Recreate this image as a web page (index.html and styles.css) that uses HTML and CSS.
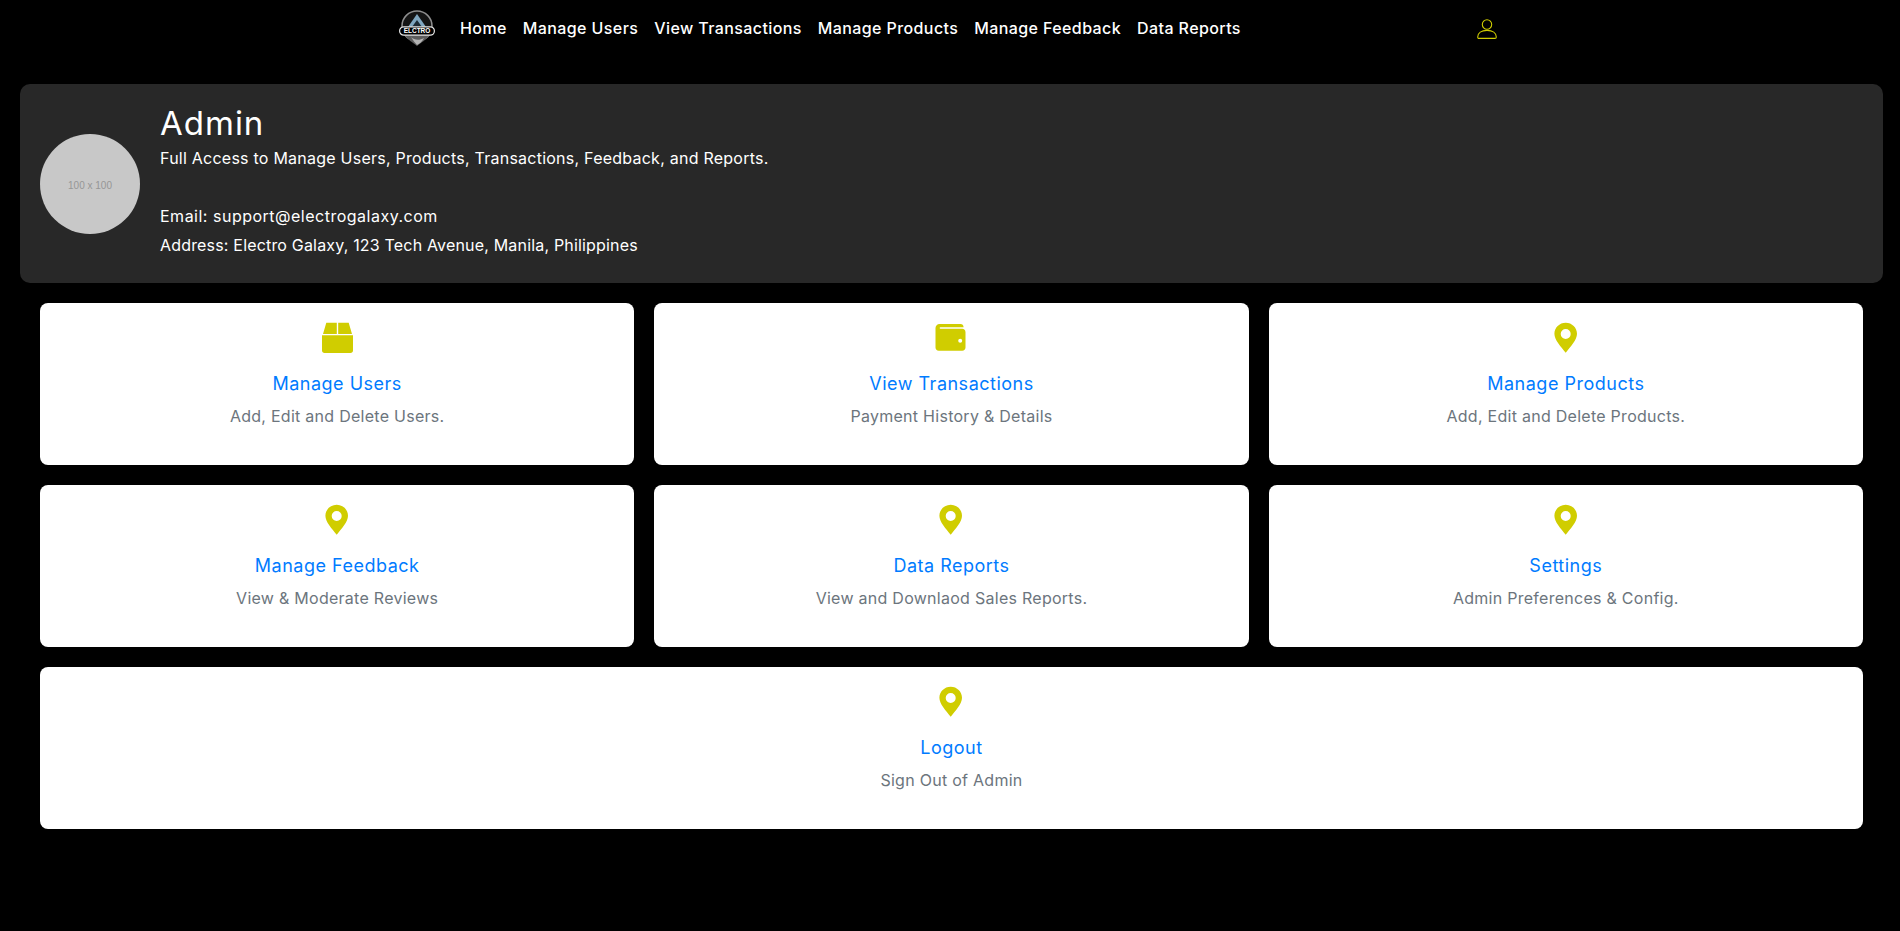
FILE: index.html
```html
<!DOCTYPE html>
<html lang="en">
<head>
<meta charset="utf-8">
<title>Admin</title>
<link rel="stylesheet" href="styles.css">
</head>
<body>
<header class="topbar">
  <svg class="logo" viewBox="0 0 40 40" aria-hidden="true">
    <circle cx="20" cy="17" r="15" fill="#141414" stroke="#8e8e8e" stroke-width="1.5"/>
    <path d="M20 5 L29 18 H11 Z" fill="#7fa6bf"/>
    <path d="M20 11 L25 18 H15 Z" fill="#1d2a33"/>
    <path d="M8 26 C11 31 15 33 20 37 C25 33 29 31 32 26 Z" fill="#5c5c5c"/>
    <path d="M14 28 C17 31 22 32 27 29 C25 33 22 35 20 36 C18 34 16 31 14 28 Z" fill="#b4b4b4"/>
    <rect x="2.6" y="17.8" width="34.8" height="8.4" rx="4.2" fill="#000" stroke="#e6e6e6" stroke-width="1.2"/>
    <text x="20" y="24.4" class="logo-text" text-anchor="middle">ELCTRO</text>
  </svg>
  <nav class="nav">
    <a href="#">Home</a>
    <a href="#">Manage Users</a>
    <a href="#">View Transactions</a>
    <a href="#">Manage Products</a>
    <a href="#">Manage Feedback</a>
    <a href="#">Data Reports</a>
  </nav>
  <svg class="user" viewBox="0 0 20 20" aria-hidden="true">
    <circle cx="10" cy="5.5" r="4.7"/>
    <path d="M0.7 18 C0.7 13.9 4.5 11.4 10 11.4 C15.5 11.4 19.3 13.9 19.3 18 C19.3 19 18.9 19.4 18 19.4 H2 C1.1 19.4 0.7 19 0.7 18 Z"/>
  </svg>
</header>

<section class="profile">
  <div class="avatar">100 x 100</div>
  <div class="info">
    <h1>Admin</h1>
    <p class="lead">Full Access to Manage Users, Products, Transactions, Feedback, and Reports.</p>
    <p class="email">Email: support@electrogalaxy.com</p>
    <p class="address">Address: Electro Galaxy, 123 Tech Avenue, Manila, Philippines</p>
  </div>
</section>

<main class="grid">
  <a class="card" href="#">
    <svg class="ico" viewBox="0 0 32 32" aria-hidden="true"><path d="M5.3 0.8 H15.8 V12 H2 Z M17.2 0.8 H27.7 L31 12 H17.2 Z M1 13.3 H32 V28.5 C32 30.1 31 31 29.5 31 H3.5 C2 31 1 30.1 1 28.5 Z"/></svg>
    <h2>Manage Users</h2>
    <p>Add, Edit and Delete Users.</p>
  </a>
  <a class="card" href="#">
    <svg class="ico" viewBox="0 0 32 32" aria-hidden="true"><path fill-rule="evenodd" d="M4.5 2 H25.5 C27.4 2 28.4 3.2 28.6 5.2 H5.4 C4.4 5.2 4.4 6.8 5.4 6.8 H27.2 C29.2 6.8 30.5 8.2 30.5 10.2 V25.5 C30.5 27.5 29.2 28.7 27.2 28.7 H3.8 C1.8 28.7 0.5 27.5 0.5 25.5 V6 C0.5 3.8 2.3 2 4.5 2 Z M25.2 16.7 A2 2 0 1 0 25.2 20.7 A2 2 0 1 0 25.2 16.7 Z"/></svg>
    <h2>View Transactions</h2>
    <p>Payment History &amp; Details</p>
  </a>
  <a class="card" href="#">
    <svg class="ico" viewBox="0 0 32 32" aria-hidden="true"><use href="#pin"/></svg>
    <h2>Manage Products</h2>
    <p>Add, Edit and Delete Products.</p>
  </a>
  <a class="card" href="#">
    <svg class="ico" viewBox="0 0 32 32" aria-hidden="true"><use href="#pin"/></svg>
    <h2>Manage Feedback</h2>
    <p>View &amp; Moderate Reviews</p>
  </a>
  <a class="card" href="#">
    <svg class="ico" viewBox="0 0 32 32" aria-hidden="true"><use href="#pin"/></svg>
    <h2>Data Reports</h2>
    <p>View and Downlaod Sales Reports.</p>
  </a>
  <a class="card" href="#">
    <svg class="ico" viewBox="0 0 32 32" aria-hidden="true"><use href="#pin"/></svg>
    <h2>Settings</h2>
    <p>Admin Preferences &amp; Config.</p>
  </a>
  <a class="card wide" href="#">
    <svg class="ico" viewBox="0 0 32 32" aria-hidden="true"><use href="#pin"/></svg>
    <h2>Logout</h2>
    <p>Sign Out of Admin</p>
  </a>
</main>

<svg class="defs" aria-hidden="true">
  <symbol id="pin" viewBox="0 0 32 32"><path fill-rule="evenodd" d="M15.7 0.7 C22 0.7 27 5.6 27 11.8 C27 18 20.5 24.8 15.7 30.8 C10.9 24.8 4.4 18 4.4 11.8 C4.4 5.6 9.4 0.7 15.7 0.7 Z M15.7 7 A5 5 0 1 0 15.7 17 A5 5 0 1 0 15.7 7 Z"/></symbol>
</svg>
</body>
</html>
```

FILE: styles.css
```css
* { box-sizing: border-box; }
html, body { margin: 0; padding: 0; }
body {
  height: 931px;
  overflow: hidden;
  background: #000;
  color: #fff;
  font-family: Inter, "Liberation Sans", sans-serif;
  font-size: 16px;
}
.topbar {
  display: flex;
  align-items: center;
  height: 58px;
  margin-bottom: 26px;
  padding-left: 397px;
}
.logo { width: 40px; height: 40px; flex: none; }
.logo-text { font-family: "Liberation Sans", sans-serif; font-size: 6.5px; font-weight: 700; fill: #fff; }
.nav { display: flex; gap: 16px; margin-left: 23px; padding-bottom: 2px; }
.nav a {
  color: #fff;
  text-decoration: none;
  font-weight: 500;
  font-size: 16px;
  line-height: 22px;
  letter-spacing: 0.4px;
}
.user {
  width: 20px;
  height: 20px;
  margin-left: 236px;
  fill: none;
  stroke: #d0cd00;
  stroke-width: 1.1;
  flex: none;
}
.profile {
  display: flex;
  align-items: center;
  height: 199px;
  margin: 0 17px 20px 20px;
  padding: 0 20px;
  background: #282828;
  border-radius: 10px;
}
.avatar {
  width: 100px;
  height: 100px;
  margin-right: 20px;
  padding-top: 4px;
  flex: none;
  display: flex;
  align-items: center;
  justify-content: center;
  border-radius: 50%;
  background: #c8c8c8;
  color: #969696;
  font-family: "Liberation Sans", sans-serif;
  font-size: 10px;
}
.info { padding-bottom: 1px; }
.info h1 {
  margin: 0 0 4px;
  font-size: 33px;
  line-height: 38px;
  font-weight: 400;
  letter-spacing: 1px;
}
.info p {
  margin: 0 0 5px;
  line-height: 24px;
  font-weight: 400;
}
.info .lead { margin-bottom: 34px; letter-spacing: 0.24px; }
.info .email { letter-spacing: 0.5px; }
.info .address { letter-spacing: 0.18px; }
.grid {
  display: grid;
  grid-template-columns: repeat(3, 1fr);
  gap: 20px;
  margin: 0 37px 0 40px;
}
.card {
  display: flex;
  flex-direction: column;
  align-items: center;
  height: 162px;
  padding-top: 19px;
  background: #fff;
  border-radius: 8px;
  text-decoration: none;
}
.card.wide { grid-column: 1 / -1; }
.ico { width: 32px; height: 32px; fill: #d0cd00; flex: none; }
.card h2 {
  margin: 19px 0 9px;
  color: #007bff;
  font-size: 18px;
  line-height: 22px;
  font-weight: 400;
  letter-spacing: 0.5px;
}
.card p {
  margin: 0;
  color: #6c757d;
  font-size: 16px;
  line-height: 24px;
  letter-spacing: 0.27px;
}
.defs { display: none; }
```
